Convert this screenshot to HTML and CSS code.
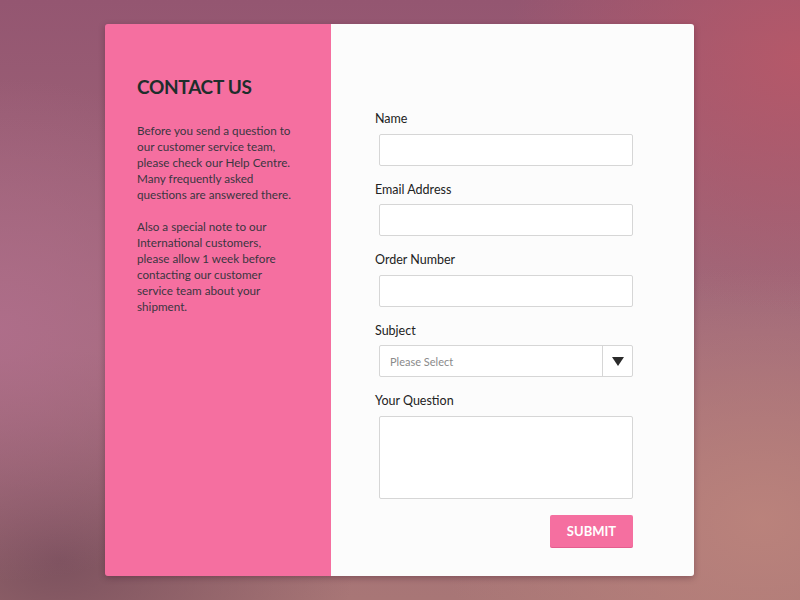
FILE: index.html
```html
<!DOCTYPE html>
<html>
<head>
<meta charset="utf-8">
<link rel="stylesheet" href="styles.css">
</head>
<body>
<div class="card">
  <div class="side">
    <h1 class="title">CONTACT US</h1>
    <p class="text">Before you send a question to our customer service team, please check our Help Centre. Many frequently asked questions are answered there.</p>
    <p class="text">Also a special note to our International customers, please allow 1 week before contacting our customer service team about your shipment.</p>
  </div>
  <form class="form">
    <label class="label">Name</label>
    <div class="field"></div>
    <label class="label">Email Address</label>
    <div class="field"></div>
    <label class="label">Order Number</label>
    <div class="field"></div>
    <label class="label">Subject</label>
    <div class="field select">
      <span class="placeholder">Please Select</span>
      <span class="arrow"><svg width="12" height="9" viewBox="0 0 12 9"><path d="M0 0H12L6 9Z" fill="#2b2b2b"/></svg></span>
    </div>
    <label class="label">Your Question</label>
    <div class="field area"></div>
    <div class="actions"><button type="button" class="submit">SUBMIT</button></div>
  </form>
</div>
</body>
</html>
```
FILE: styles.css
```css
html, body {
  margin: 0;
  height: 600px;
  overflow: hidden;
}
body {
  font-family: Lato, "Open Sans", sans-serif;
  background:
    radial-gradient(ellipse 420px 360px at 0px 330px, rgba(176,110,140,0.85), rgba(176,110,140,0) 70%),
    radial-gradient(ellipse 420px 360px at 800px 60px, rgba(184,88,104,0.9), rgba(184,88,104,0) 70%),
    radial-gradient(ellipse 460px 360px at 760px 520px, rgba(188,132,124,0.9), rgba(188,132,124,0) 70%),
    radial-gradient(ellipse 420px 300px at 60px 560px, rgba(120,78,92,0.9), rgba(120,78,92,0) 70%),
    linear-gradient(180deg, #945671 0%, #a26a7a 55%, #a87676 100%);
  padding-top: 24px;
  box-sizing: border-box;
}
.card {
  margin-left: 105px;
  width: 589px;
  height: 552px;
  display: flex;
  border-radius: 3px;
  overflow: hidden;
  box-shadow: 0 2px 6px rgba(60,20,40,0.35);
}
.side {
  width: 226px;
  background: #f56fa0;
  padding: 51px 38px 0 32px;
  box-sizing: border-box;
  color: #2e2a30;
}
.title {
  margin: 0;
  font-size: 19px;
  line-height: 24px;
  font-weight: 700;
  color: #1e2e2c;
  letter-spacing: -0.3px;
  white-space: nowrap;
}
.text {
  margin: 23px 0 0 0;
  font-size: 11.7px;
  line-height: 16px;
  color: #3a3640;
}
.text + .text {
  margin-top: 16px;
}
.form {
  flex: 1;
  background: #fcfcfc;
  padding: 87px 61px 0 44px;
  margin: 0;
  display: flex;
  flex-direction: column;
}
.label {
  font-size: 12.5px;
  line-height: 15.5px;
  color: #222;
}
.field {
  margin: 7px 0 16px 4px;
  height: 32px;
  box-sizing: border-box;
  border: 1px solid #d6d6d6;
  border-radius: 2px;
  background: #fff;
}
.select {
  display: flex;
  align-items: center;
}
.placeholder {
  flex: 1;
  padding-left: 10px;
  font-size: 11px;
  color: #8a8a8a;
}
.arrow {
  width: 29px;
  height: 100%;
  border-left: 1px solid #d6d6d6;
  display: flex;
  align-items: center;
  justify-content: center;
}
.area {
  height: 83px;
  margin-bottom: 16px;
}
.actions {
  display: flex;
  justify-content: flex-end;
}
.submit {
  width: 83px;
  height: 33px;
  border: none;
  border-radius: 2px;
  background: #f56fa0;
  color: #fff;
  font-family: Lato, "Open Sans", sans-serif;
  font-weight: 700;
  font-size: 13px;
  padding: 0;
  box-shadow: inset 0 -1px 0 rgba(200,60,110,0.35);
}
```
